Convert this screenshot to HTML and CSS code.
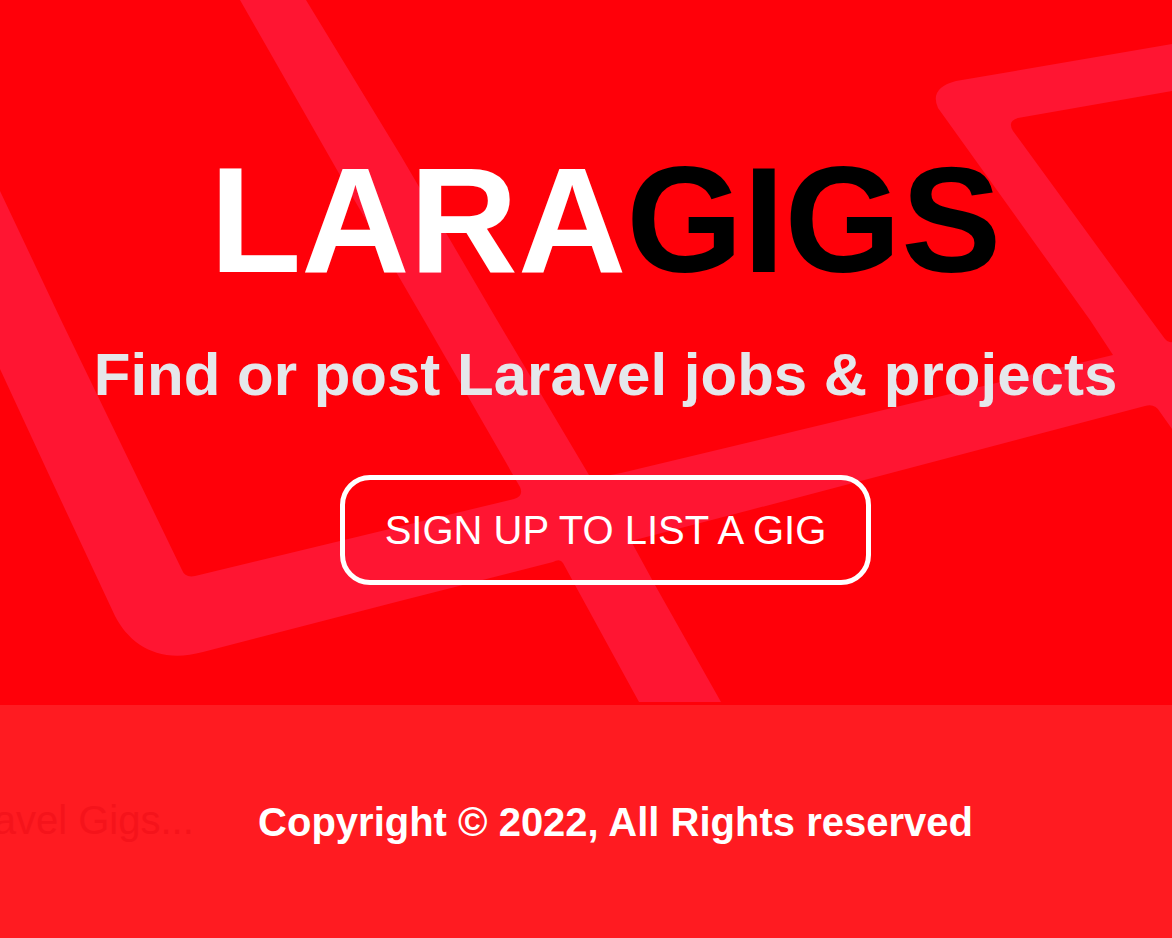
FILE: index.html
```html
<!DOCTYPE html>
<html lang="en">
<head>
<meta charset="utf-8">
<meta name="viewport" content="width=device-width, initial-scale=1">
<title>LaraGigs | Find Laravel Jobs &amp; Projects</title>
<link rel="stylesheet" href="styles.css">
</head>
<body>
<main class="hero">
  <svg class="hero-art" viewBox="0 0 1172 705" preserveAspectRatio="xMidYMid slice" aria-hidden="true">
    <path fill-rule="evenodd" d="M240 0H306L401 156L497 320L589 475Q600 478 621 473L800 430L1113 355L1090 320L938 108Q929 88 956 81L1172 44V91L1018 118Q1007 121 1013 131L1151 320L1165 339Q1168 343 1172 342V429L1160 412Q1155 403 1145 406L800 497L631 541L655 585L721 702H639L575 585L563 563Q560 558 553 562L400 601L203 652C159 664 130 645 115 616L50 477L0 369V191L61 320L182 570Q185 578 195 576L514 499Q524 496 520 487L424 320L341 177Z"/>
  </svg>
  <div class="hero-content">
    <h1 class="hero-title">LARA<span class="hero-accent">GIGS</span></h1>
    <p class="hero-tagline">Find or post Laravel jobs &amp; projects</p>
    <a class="hero-button" href="#register">SIGN UP TO LIST A GIG</a>
  </div>
</main>
<footer class="footer">
  <input class="ghost-search" type="text" placeholder="Search Laravel Gigs..." aria-label="Search Laravel Gigs">
  <p class="copyright">Copyright © 2022, All Rights reserved</p>
</footer>
</body>
</html>
```

FILE: styles.css
```css
* {
  box-sizing: border-box;
}

body {
  margin: 0;
  min-height: 100vh;
  display: flex;
  flex-direction: column;
  overflow-x: hidden;
  background: #ff0009;
  color: #fff;
  font-family: "Liberation Sans", Arial, sans-serif;
  font-size: 40px;
  line-height: 60px;
}

.hero {
  position: relative;
  padding: 145px 0 120px 39px;
  text-align: center;
}

.hero-art {
  position: absolute;
  inset: 0;
  width: 100%;
  height: 100%;
  fill: #ff1532;
}

.hero-content {
  position: relative;
  display: flex;
  flex-direction: column;
  align-items: center;
}

.hero-title {
  margin: 0;
  font-size: 150px;
  line-height: 150px;
  font-weight: 700;
}

.hero-accent {
  color: #000;
}

.hero-tagline {
  margin: 40px 0 60px;
  color: #e5e7eb;
  font-size: 60px;
  line-height: 80px;
  font-weight: 700;
}

.hero-button {
  padding: 20px 40px;
  border: 5px solid #fff;
  border-radius: 30px;
  color: #fff;
  text-decoration: none;
}

.footer {
  position: relative;
  flex: 1;
  display: flex;
  align-items: center;
  justify-content: center;
  padding: 20px 0 20px 59px;
  background: #ff1b21;
  overflow: hidden;
}

.ghost-search {
  position: absolute;
  top: 85px;
  left: -202px;
  width: 400px;
  height: 60px;
  padding: 0;
  border: 0;
  background: transparent;
  font: inherit;
}

.ghost-search::placeholder {
  color: #f5131b;
  opacity: 1;
}

.copyright {
  margin: 0;
  font-weight: 700;
}
```
